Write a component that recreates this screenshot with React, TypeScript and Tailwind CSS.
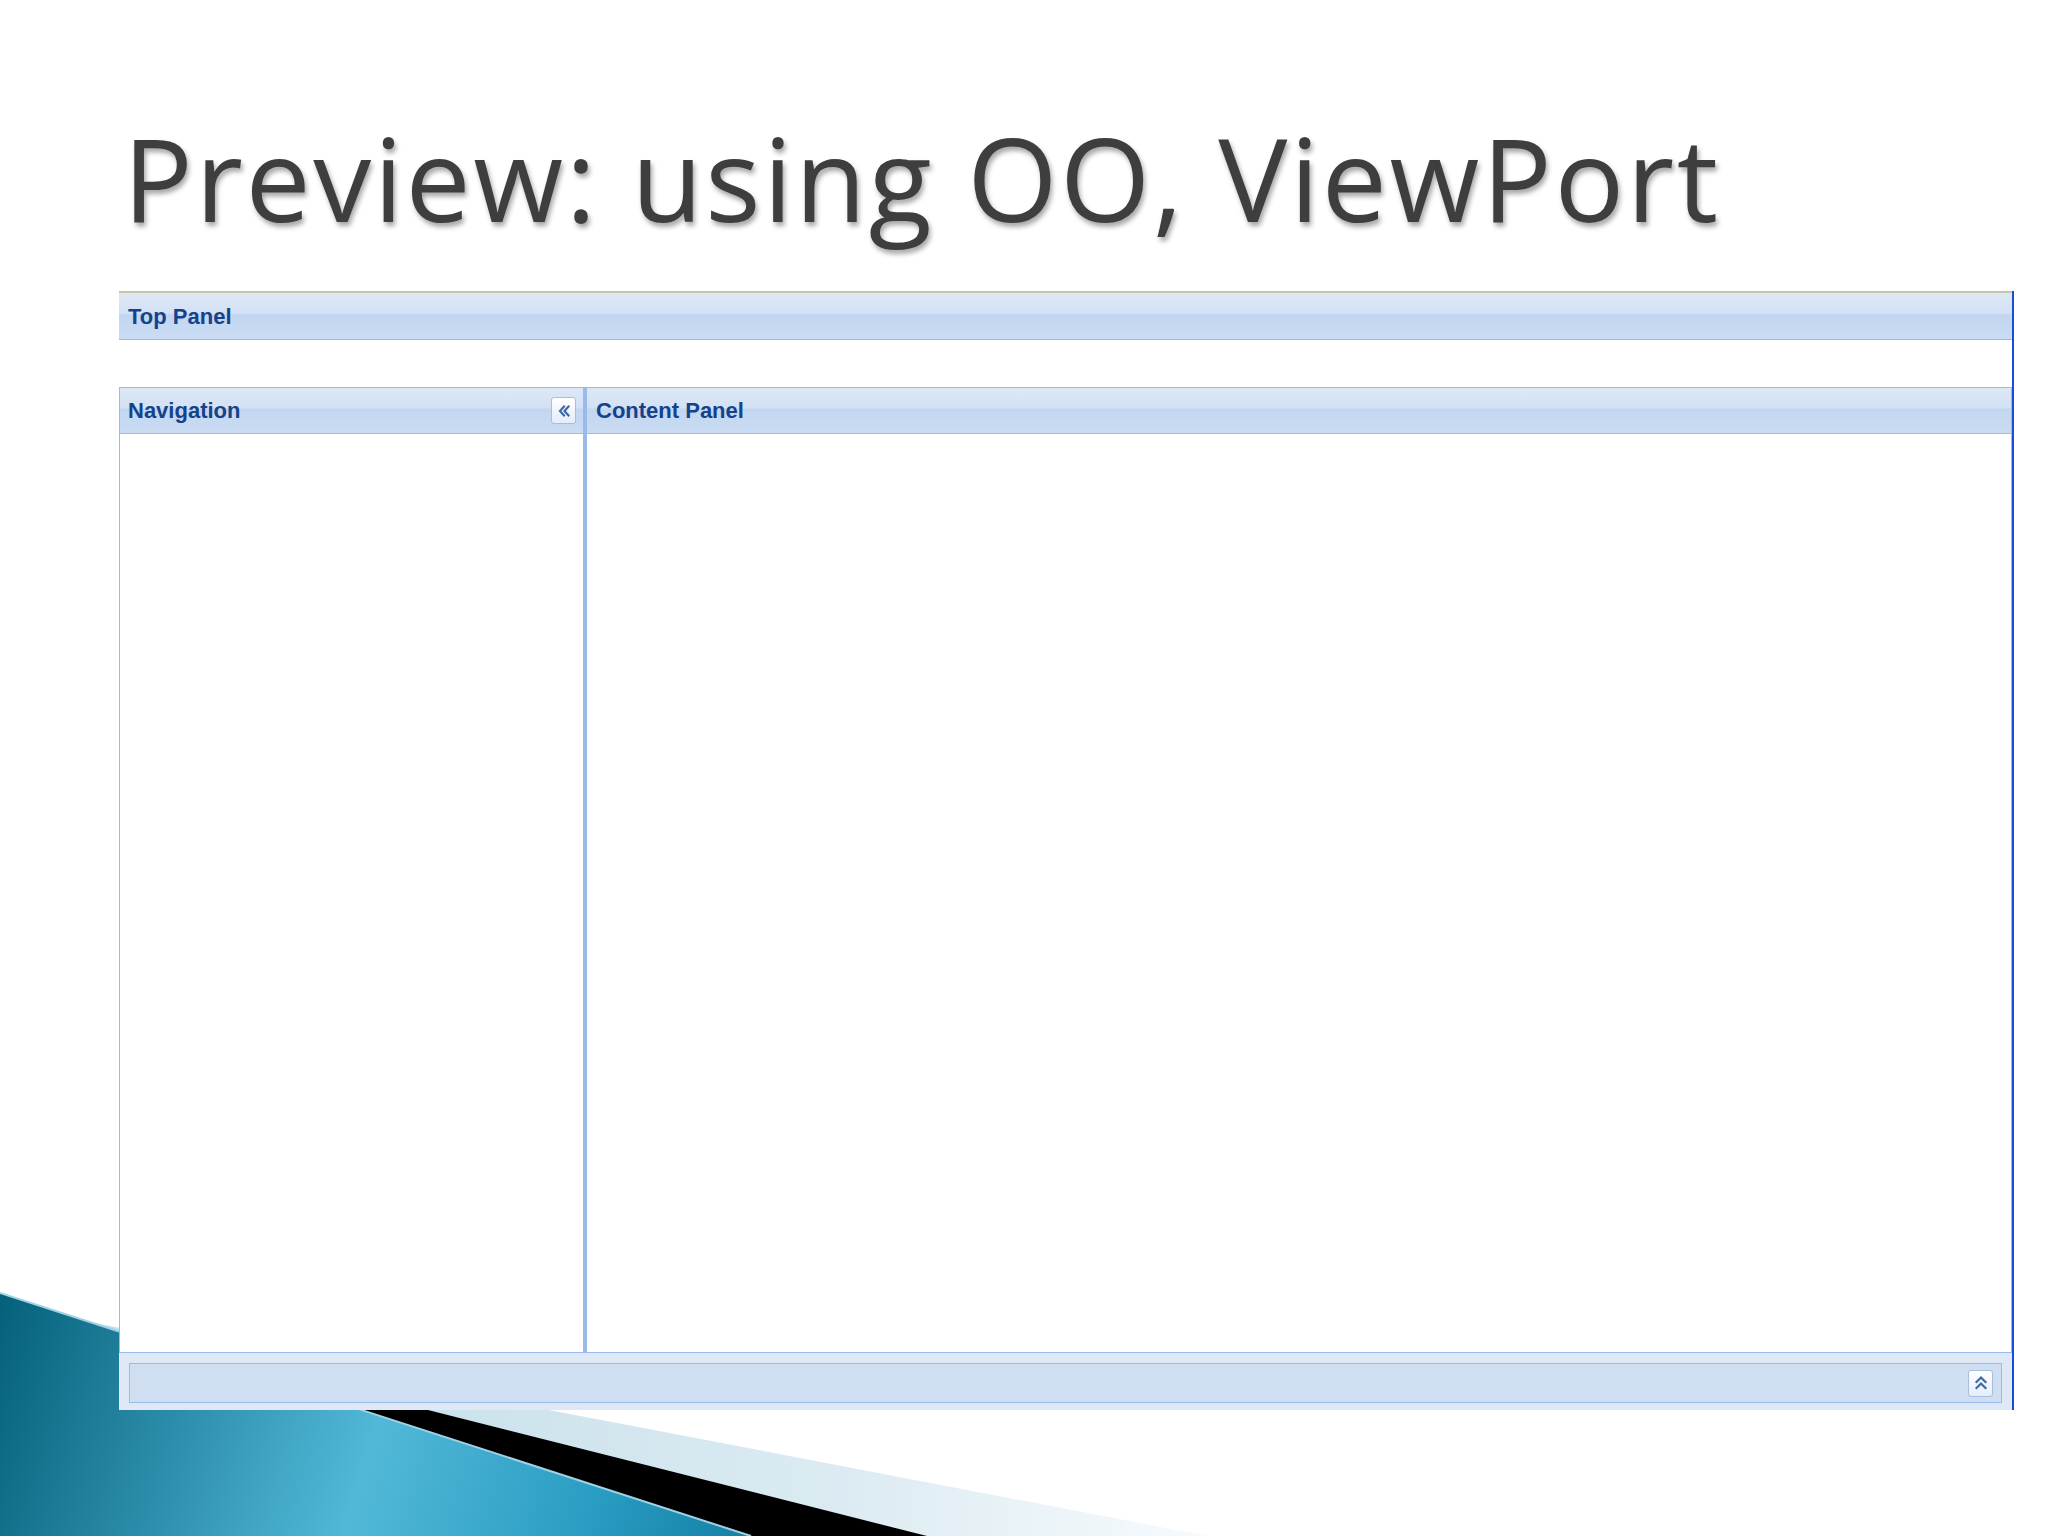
import React from 'react';

function ChevronsLeft() {
  return (
    <svg width="16" height="16" viewBox="0 0 16 16" fill="none" stroke="#3d6aa6" strokeWidth="2.2" strokeLinecap="square">
      <path d="M8 3.5 L4 8 L8 12.5" />
      <path d="M12.5 3.5 L8.5 8 L12.5 12.5" />
    </svg>
  );
}

function ChevronsUp() {
  return (
    <svg width="16" height="18" viewBox="0 0 16 18" fill="none" stroke="#3d6aa6" strokeWidth="2.2" strokeLinecap="square">
      <path d="M3.5 8 L8 3.5 L12.5 8" />
      <path d="M3.5 14 L8 9.5 L12.5 14" />
    </svg>
  );
}

function Backdrop() {
  return (
    <svg className="absolute inset-0" width="2048" height="1536" viewBox="0 0 2048 1536">
      <defs>
        <linearGradient id="teal" gradientUnits="userSpaceOnUse" x1="0" y1="1300" x2="760" y2="1536">
          <stop offset="0" stopColor="#05617b" />
          <stop offset="0.5" stopColor="#52b8d8" />
          <stop offset="0.78" stopColor="#2b9ec3" />
          <stop offset="1" stopColor="#137ea3" />
        </linearGradient>
        <linearGradient id="pale" gradientUnits="userSpaceOnUse" x1="300" y1="0" x2="1210" y2="0">
          <stop offset="0" stopColor="#c6dfea" />
          <stop offset="0.6" stopColor="#dcebf2" />
          <stop offset="1" stopColor="#f7fbfd" />
        </linearGradient>
      </defs>
      <polygon points="0,1305 1208,1536 0,1536" fill="url(#pale)" />
      <polygon points="0,1302 927,1536 0,1536" fill="#000000" />
      <polygon points="0,1293 751,1536 0,1536" fill="url(#teal)" />
      <line x1="0" y1="1293" x2="751" y2="1536" stroke="#9fd2e4" strokeWidth="2" />
    </svg>
  );
}

const headerBg = 'bg-[linear-gradient(to_bottom,#dde8f6_0%,#d3e1f4_45%,#c2d6f1_46%,#cadcf3_100%)]';
const toolBtn =
  'w-[25px] h-[27px] flex items-center justify-center rounded-[3px] border border-[#a7bedf] bg-[linear-gradient(to_bottom,#ffffff,#e4edf9)]';

export default function App() {
  return (
    <div className="relative w-[2048px] h-[1536px] bg-white overflow-hidden">
      <Backdrop />
      <div className="relative">
        <h1
          className="pl-[123px] pt-[102px] h-[291px] text-[116px] leading-[150px] text-[#3e3e3e] tracking-[2.6px] [text-shadow:2px_4px_5px_rgba(0,0,0,0.35)]"
          style={{ fontFamily: '"Open Sans", "Noto Sans", sans-serif' }}
        >
          Preview: using OO, ViewPort
        </h1>

        <div
          className="ml-[119px] w-[1895px] border-r-2 border-[#1c4cd6] bg-white text-[#15428b] font-bold text-[22px]"
          style={{ fontFamily: '"Liberation Sans", Arial, sans-serif' }}
        >
          {/* top panel */}
          <div className="border-t-2 border-[#c8c4a6]">
            <div className={`h-[47px] flex items-center px-[9px] border-b border-[#99bbe8] ${headerBg}`}>
              Top Panel
            </div>
            <div className="h-[47px] bg-white" />
          </div>

          {/* nav + content */}
          <div className="flex h-[966px]">
            <div className="w-[466px] flex flex-col border border-[#99bbe8] border-r-2">
              <div className={`h-[46px] flex items-center justify-between pl-[8px] pr-[7px] border-b border-[#99bbe8] ${headerBg}`}>
                <span>Navigation</span>
                <div className={toolBtn}>
                  <ChevronsLeft />
                </div>
              </div>
              <div className="flex-1 bg-white" />
            </div>
            <div className="flex-1 flex flex-col border border-[#99bbe8] border-l-2">
              <div className={`h-[46px] flex items-center pl-[9px] border-b border-[#99bbe8] ${headerBg}`}>
                Content Panel
              </div>
              <div className="flex-1 bg-white" />
            </div>
          </div>

          {/* footer */}
          <div className="h-[57px] bg-[#dfe8f6] pt-[10px] pb-[7px] px-[10px]">
            <div className="h-full border border-[#99bbe8] bg-[#d0def2] flex items-center justify-end pr-[8px]">
              <div className={toolBtn}>
                <ChevronsUp />
              </div>
            </div>
          </div>
        </div>
      </div>
    </div>
  );
}
